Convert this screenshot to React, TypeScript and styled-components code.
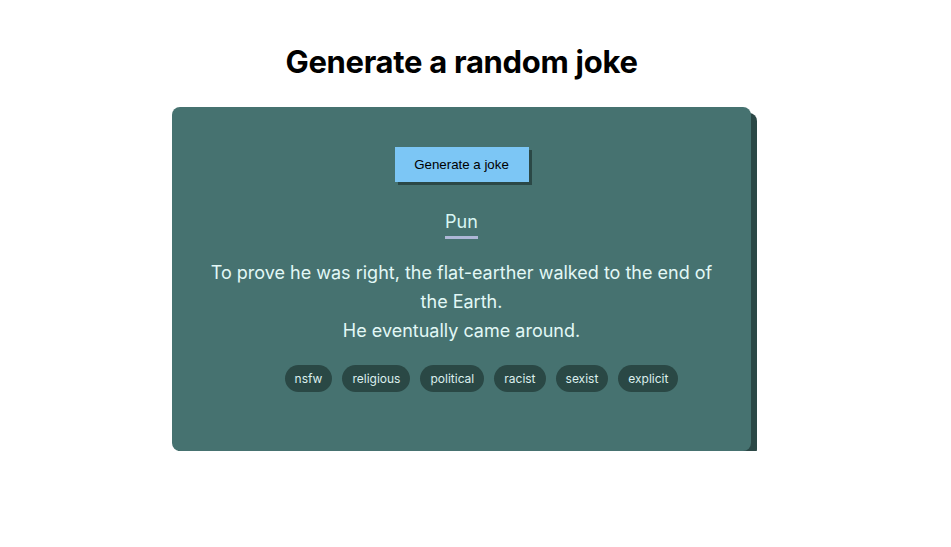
import React from 'react';
import styled, { createGlobalStyle } from 'styled-components';

const GlobalStyle = createGlobalStyle`
    body {
        margin: 0;
        background: #ffffff;
        font-family: Inter, "Noto Sans", sans-serif;
    }
`;

const FLAGS = ['nsfw', 'religious', 'political', 'racist', 'sexist', 'explicit'];

const App: React.FC = () => {
    return (
        <>
            <GlobalStyle />
            <Page>
                <Title>Generate a random joke</Title>
                <Card>
                    <GenerateButton>Generate a joke</GenerateButton>
                    <Category>Pun</Category>
                    <Joke>
                        To prove he was right, the flat-earther walked to the end of the Earth.
                        <br />
                        He eventually came around.
                    </Joke>
                    <Tags>
                        {FLAGS.map(f => (
                            <Tag key={f}>{f}</Tag>
                        ))}
                    </Tags>
                </Card>
            </Page>
        </>
    );
};

const Page = styled.main`
    width: 923px;
    display: flex;
    flex-direction: column;
    align-items: center;
    padding-top: 43px;
`;

const Title = styled.h1`
    margin: 0 0 27px;
    font-size: 31px;
    line-height: 37px;
    font-weight: 700;
    color: #000;
    letter-spacing: -0.3px;
`;

const Card = styled.section`
    box-sizing: border-box;
    width: 579px;
    height: 344px;
    padding: 40px 30px 0;
    background-color: #467270;
    border-radius: 8px;
    box-shadow: 6px 6px 0 #2b4846;
    display: flex;
    flex-direction: column;
    align-items: center;
`;

const GenerateButton = styled.button`
    width: 134px;
    height: 35px;
    border: none;
    border-radius: 0;
    background-color: #7cc6f5;
    box-shadow: 3px 3px 0 #2b4846;
    font-family: "Liberation Sans", Arial, sans-serif;
    font-size: 13.3px;
    color: #000;
    cursor: pointer;
`;

const Category = styled.h2`
    margin: 29px 0 0;
    padding-bottom: 3px;
    font-size: 18px;
    line-height: 22px;
    font-weight: 400;
    color: #d8f6f3;
    border-bottom: 3px solid #aeb7d6;
`;

const Joke = styled.p`
    margin: 19px 0 0;
    max-width: 515px;
    font-size: 18px;
    line-height: 29px;
    color: #e2f8f6;
    text-align: center;
`;

const Tags = styled.ul`
    display: flex;
    gap: 10px;
    margin: 20px 0 0;
    padding: 0 0 0 40px;
    list-style: none;
`;

const Tag = styled.li`
    height: 27px;
    padding: 0 10px;
    display: flex;
    align-items: center;
    border-radius: 14px;
    background-color: #2a4845;
    color: #dcefed;
    font-size: 12px;
`;

export default App;
